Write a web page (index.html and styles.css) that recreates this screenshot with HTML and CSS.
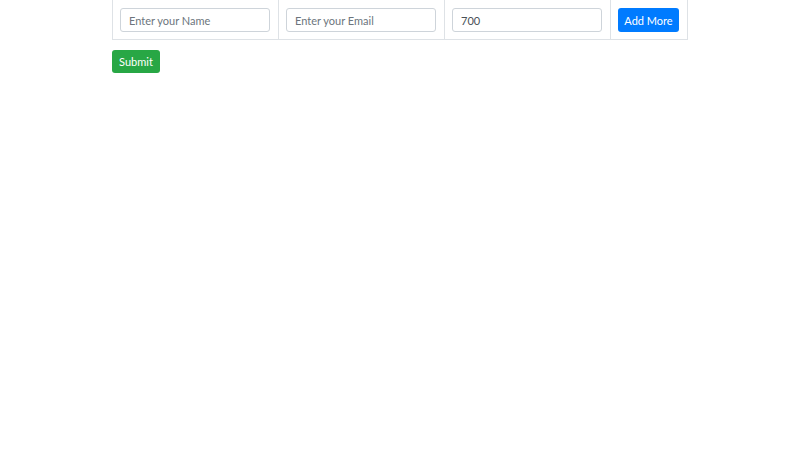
FILE: index.html
```html
<!DOCTYPE html>
<html>
<head>
<meta charset="utf-8">
<link rel="stylesheet" href="styles.css">
</head>
<body>
<div class="wrap">
  <table class="grid">
    <tr>
      <td class="col"><input class="field" type="text" placeholder="Enter your Name"></td>
      <td class="col"><input class="field" type="text" placeholder="Enter your Email"></td>
      <td class="col"><input class="field" type="text" value="700"></td>
      <td class="col-btn"><button class="btn btn-blue">Add More</button></td>
    </tr>
  </table>
  <button class="btn btn-green">Submit</button>
</div>
</body>
</html>
```
FILE: styles.css
```css
html, body {
  margin: 0;
  padding: 0;
  background: #fff;
  font-family: Lato, "Open Sans", "Liberation Sans", sans-serif;
}
.wrap {
  padding-left: 112px;
}
.grid {
  border-collapse: collapse;
  margin-top: -1px;
  margin-bottom: 10px;
}
.grid td {
  border: 1px solid #dee2e6;
  padding: 8px 8px 7px 7px;
}
.col {
  width: 150px;
}
.col-btn {
  width: 61px;
}
.field {
  display: block;
  box-sizing: border-box;
  width: 150px;
  height: 24px;
  margin: 0;
  padding: 0 8px;
  border: 1px solid #ced4da;
  border-radius: 3px;
  font-family: inherit;
  font-size: 11px;
  color: #495057;
  outline: none;
}
.field::placeholder {
  color: #6c757d;
}
.btn {
  display: block;
  box-sizing: border-box;
  height: 24px;
  margin: 0;
  padding: 0;
  border: none;
  border-radius: 3px;
  font-family: inherit;
  font-size: 11px;
  color: #fff;
  cursor: pointer;
}
.btn-blue {
  background: #007bff;
  width: 61px;
}
.btn-green {
  background: #28a745;
  width: 48px;
  height: 23px;
}
```
